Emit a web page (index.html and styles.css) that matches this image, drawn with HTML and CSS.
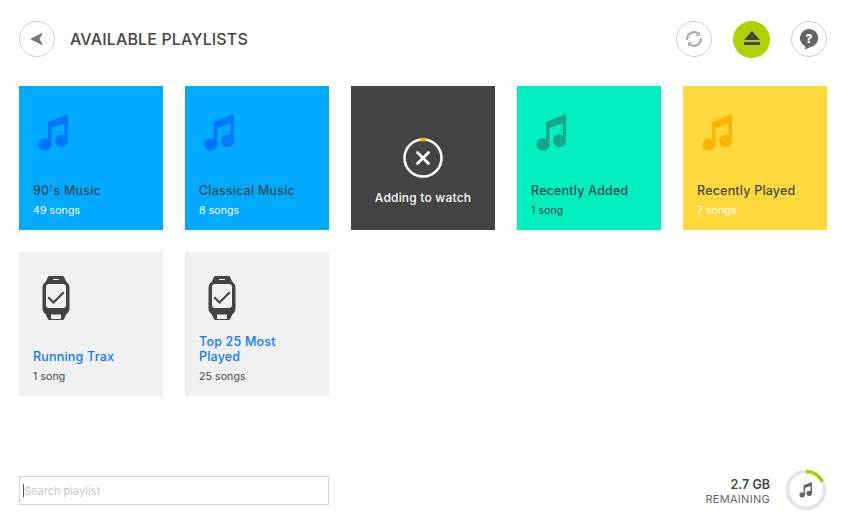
FILE: index.html
```html
<!DOCTYPE html>
<html lang="en">
<head>
  <meta charset="UTF-8" />
  <meta name="viewport" content="width=device-width, initial-scale=1.0" />
  <title>Available Playlists</title>
  <link rel="stylesheet" href="styles.css">
</head>
<body>
  <svg class="defs" width="0" height="0">
    <symbol id="note" viewBox="0 0 32 38">
      <path d="M10 8 L30 0 V27 H26.500 V9.500 L13.500 14 V31 H10 Z"/>
      <ellipse cx="7" cy="30.500" rx="6.500" ry="6.200"/>
      <ellipse cx="23.500" cy="27" rx="6.500" ry="6.200"/>
    </symbol>
    <symbol id="watch" viewBox="0 0 28 44">
      <path fill-rule="evenodd" d="M7 0 H21 Q22 0 23 3 L24.500 6 Q27.500 8 27.500 12 V32 Q27.500 36 24.500 38 L23 41 Q22 44 21 44 H7 Q6 44 5 41 L3.500 38 Q0.500 36 0.500 32 V12 Q0.500 8 3.500 6 L5 3 Q6 0 7 0 Z M7 8 Q4 8 4 11 V29 Q4 32 7 32 H21 Q24 32 24 29 V11 Q24 8 21 8 Z M9 38.500 V43 H19 V38.500 Z M11 3 V4 H17 V3 Z"/>
      <path d="M5.500 22 L7 20.500 L11.500 25 L21 15.500 L22.500 17 L11.500 28 Z"/>
    </symbol>
  </svg>

  <div class="page">
    <header class="top">
      <button class="round">
        <svg width="16" height="16" viewBox="0 0 16 16"><path class="grey" d="M1 8 L14 1.500 L10.500 8 L14 14.500 Z"/></svg>
      </button>
      <h1>AVAILABLE PLAYLISTS</h1>
      <div class="actions">
        <button class="round">
          <svg width="18" height="18" viewBox="0 0 20 20" fill="none" stroke="#aaa" stroke-width="2.400">
            <path d="M2.500 11 A7.500 7.500 0 0 1 15 4.500"/>
            <path d="M17.500 9 A7.500 7.500 0 0 1 5 15.500"/>
            <path d="M16 2 V6 H12.500" stroke-width="1.500"/>
            <path d="M4 18 V14 H7.500" stroke-width="1.500"/>
          </svg>
        </button>
        <button class="round eject">
          <svg width="16" height="16" viewBox="0 0 16 16"><path fill="#444" d="M8 0 L16 9 H0 Z M0 11 H16 V14 H0 Z"/></svg>
        </button>
        <button class="round">
          <svg width="20" height="22" viewBox="0 0 20 22"><path fill="#666" d="M10 1 A9 9 0 0 1 11.500 18.900 L6 21.500 L6.500 18.300 A9 9 0 0 1 10 1 Z"/><text x="10" y="14.500" class="help">?</text></svg>
        </button>
      </div>
    </header>

    <main class="grid">
      <div class="card blue">
        <svg class="icon"><use href="#note"/></svg>
        <div class="name">90's Music</div>
        <div class="count">49 songs</div>
      </div>
      <div class="card blue">
        <svg class="icon"><use href="#note"/></svg>
        <div class="name">Classical Music</div>
        <div class="count">8 songs</div>
      </div>
      <div class="card adding">
        <svg width="42" height="42" viewBox="0 0 42 42" fill="none">
          <circle cx="21" cy="21" r="18.500" stroke="#fff" stroke-width="2.500"/>
          <path d="M18 2.700 A18.500 18.500 0 0 1 24 2.700" stroke="#ffb400" stroke-width="3.500"/>
          <path d="M15.500 15.500 L26.500 26.500 M26.500 15.500 L15.500 26.500" stroke="#fff" stroke-width="2.800" stroke-linecap="round"/>
        </svg>
        <div class="adding-text">Adding to watch</div>
      </div>
      <div class="card green">
        <svg class="icon"><use href="#note"/></svg>
        <div class="name">Recently Added</div>
        <div class="count">1 song</div>
      </div>
      <div class="card yellow">
        <svg class="icon"><use href="#note"/></svg>
        <div class="name">Recently Played</div>
        <div class="count">7 songs</div>
      </div>
      <div class="card synced">
        <svg class="icon watch"><use href="#watch"/></svg>
        <div class="name">Running Trax</div>
        <div class="count">1 song</div>
      </div>
      <div class="card synced">
        <svg class="icon watch"><use href="#watch"/></svg>
        <div class="name">Top 25 Most Played</div>
        <div class="count">25 songs</div>
      </div>
    </main>

    <footer class="bottom">
      <div class="search">Search playlist</div>
      <div class="storage">
        <div class="storage-text">
          <div class="gb">2.7 GB</div>
          <div class="remaining">REMAINING</div>
        </div>
        <svg width="42" height="42" viewBox="0 0 42 42" fill="none">
          <circle cx="21" cy="21" r="18.500" stroke="#e4e4e4" stroke-width="3.500"/>
          <path d="M21 2.500 A18.500 18.500 0 0 1 37.500 12.600" stroke="#a8cf00" stroke-width="3.500"/>
          <svg x="14" y="13" width="14" height="16"><use href="#note" fill="#666"/></svg>
        </svg>
      </div>
    </footer>
  </div>
</body>
</html>
```

FILE: styles.css
```css
* {
  box-sizing: border-box;
  font-family: 'Inter', 'Liberation Sans', sans-serif;
}
body {
  margin: 0;
  background: #fff;
  color: #444;
}
.defs {
  position: absolute;
}
.page {
  width: 848px;
  height: 516px;
  padding: 21px 21px 5px 19px;
  display: flex;
  flex-direction: column;
  overflow: hidden;
}
.top {
  display: flex;
  align-items: center;
  height: 36px;
  margin-bottom: 29px;
}
h1 {
  margin: 0 0 0 15px;
  font-size: 16px;
  letter-spacing: 0.15px;
  font-weight: 500;
  color: #444;
}
.actions {
  margin-left: auto;
  display: flex;
  gap: 21px;
}
.round {
  width: 36px;
  height: 36px;
  padding: 0;
  border: 1px solid #ccc;
  border-radius: 50%;
  background: #fff;
  display: flex;
  align-items: center;
  justify-content: center;
}
.round.eject {
  width: 37px;
  height: 37px;
  background: #aed100;
  border: none;
}
.grey {
  fill: #777;
}
.help {
  font-size: 12px;
  font-weight: 800;
  fill: #fff;
  text-anchor: middle;
}
.grid {
  display: grid;
  grid-template-columns: repeat(5, 144px);
  grid-auto-rows: 144px;
  gap: 22px;
}
.card {
  padding: 28px 14px 0;
  display: flex;
  flex-direction: column;
}
.icon {
  width: 32px;
  height: 38px;
  margin: 0 0 0 5px;
  flex: none;
}
.name {
  margin-top: auto;
  font-size: 12.500px;
  letter-spacing: 0.2px;
  line-height: 15px;
  font-weight: 500;
  color: #3c4a52;
}
.count {
  margin-top: 6px;
  margin-bottom: 12px;
  font-size: 10.500px;
  letter-spacing: 0.1px;
  line-height: 14px;
  color: #fff;
}
.blue {
  background: #00aaff;
}
.blue .icon {
  fill: #0077ff;
}
.green {
  background: #00efbd;
}
.green .icon {
  fill: #17a68c;
}
.green .count,
.synced .count {
  color: #444;
}
.yellow {
  background: #ffd93b;
}
.yellow .icon {
  fill: #ffb400;
}
.adding {
  background: #444;
  padding: 51px 0 0;
  align-items: center;
}
.adding-text {
  margin-top: 11px;
  font-size: 12px;
  letter-spacing: 0.2px;
  line-height: 15px;
  font-weight: 500;
  color: #fff;
}
.synced {
  background: #f0f0f0;
}
.synced .name {
  color: #0a7bff;
}
.icon.watch {
  width: 28px;
  height: 44px;
  margin-left: 9px;
  margin-top: -4px;
  fill: #444;
}
.bottom {
  margin-top: auto;
  display: flex;
  align-items: center;
  justify-content: space-between;
}
.search {
  position: relative;
  width: 310px;
  height: 29px;
  border: 1px solid #d4d4d4;
  padding: 1px 0 0 4px;
  font-size: 11px;
  line-height: 27px;
  color: #c8c8c8;
}
.search::before {
  content: "";
  position: absolute;
  left: 3px;
  top: 7px;
  width: 1px;
  height: 13px;
  background: #555;
}
.storage {
  display: flex;
  align-items: center;
  gap: 15px;
}
.storage-text {
  padding-top: 4px;
  text-align: right;
}
.gb {
  font-size: 12.500px;
  line-height: 14px;
  font-weight: 600;
  color: #444;
}
.remaining {
  font-size: 11px;
  letter-spacing: 0.3px;
  line-height: 14px;
  color: #666;
}
```
